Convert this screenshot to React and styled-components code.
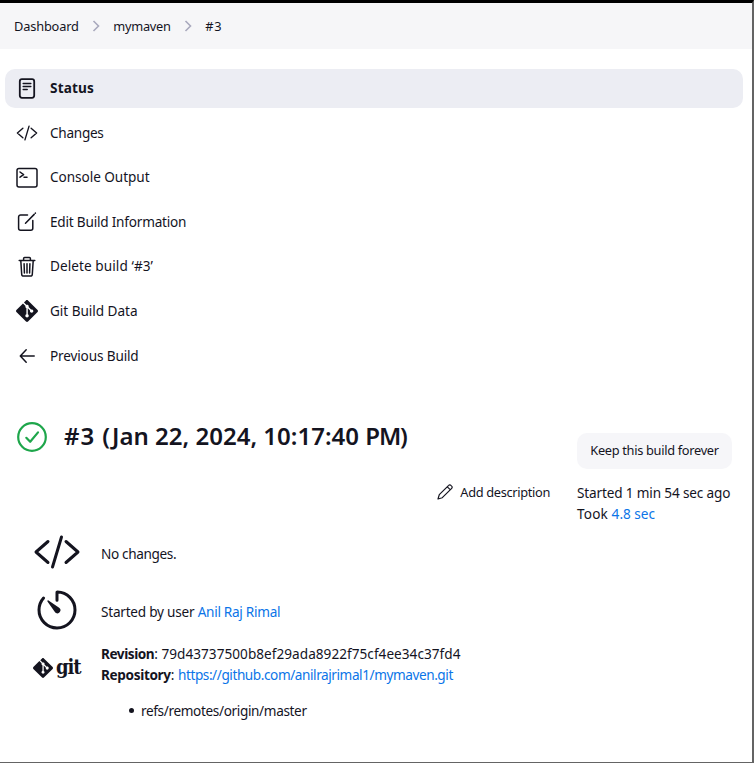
import React from "react";
import styled, { createGlobalStyle } from "styled-components";
import { IoCodeSlashOutline, IoTimerOutline } from "react-icons/io5";
import { SiGit } from "react-icons/si";

const GlobalStyle = createGlobalStyle`
  * { box-sizing: border-box; }
  body { margin: 0; background: #fff; color: #14141f; font-family: "Noto Sans", sans-serif; font-size: 13.6px; }
`;

const Page = styled.div`
  width: 754px;
  height: 763px;
  border-top: 3px solid #000;
  border-right: 2px solid #646464;
  border-bottom: 1px solid #646464;
  display: flex;
  flex-direction: column;
  overflow: hidden;
`;

const Breadcrumbs = styled.nav`
  height: 46px;
  flex: none;
  background: #f6f6f8;
  display: flex;
  align-items: center;
  padding-left: 14px;
`;

const Text = styled.span`
  white-space: pre;
  letter-spacing: ${(p) => p.$ls || 0}px;
  font-size: ${(p) => p.$size || 13.6}px;
  font-weight: ${(p) => p.$weight || 400};
`;

const Separator = styled.svg`
  width: 8px;
  height: 12px;
  margin: 0 13px 0 13.5px;
  fill: none;
  stroke: #a9a9bd;
  stroke-width: 1.6;
`;

const TaskList = styled.ul`
  list-style: none;
  margin: 20px 9px 0 5px;
  padding: 0;
  display: flex;
  flex-direction: column;
  gap: 5.6px;
`;

const Task = styled.li`
  height: 39px;
  border-radius: 10px;
  background: ${(p) => (p.$active ? "#ecedf3" : "transparent")};
  display: flex;
  align-items: center;
  gap: 12px;
  padding-left: 11px;

  ${Text} {
    padding-bottom: 2px;
  }
`;

const Glyph = styled.svg`
  width: 22px;
  height: 22px;
  flex: none;
  fill: none;
  stroke: currentColor;
  stroke-width: 1.5;
  stroke-linecap: round;
  stroke-linejoin: round;
`;

const BuildHeader = styled.header`
  display: grid;
  grid-template-columns: 1fr 175px;
  margin-top: 41px;
`;

const Title = styled.h1`
  margin: 0;
  height: 40px;
  display: flex;
  align-items: center;
  padding-left: 17px;

  ${Text} {
    padding-bottom: 2px;
  }
`;

const SuccessIcon = styled.svg`
  width: 30px;
  height: 30px;
  flex: none;
  margin-right: 17px;
  fill: none;
  stroke: #1ea64b;
  stroke-width: 2.2;
  stroke-linecap: round;
  stroke-linejoin: round;
`;

const AddDescription = styled.div`
  display: flex;
  justify-content: flex-end;
  align-items: center;
  gap: 7px;
  height: 21px;
  margin: 25px 27px 0 0;
`;

const PencilIcon = styled.svg`
  width: 16px;
  height: 16px;
  fill: none;
  stroke: currentColor;
  stroke-width: 1.2;
  stroke-linejoin: round;
`;

const Aside = styled.div`
  padding-top: 16px;
`;

const KeepButton = styled.button`
  display: flex;
  align-items: center;
  justify-content: center;
  width: 155px;
  height: 36px;
  border: 0;
  border-radius: 10px;
  background: #f6f6f9;
  color: inherit;
  font-family: inherit;
  padding: 0 0 1px;
  margin-bottom: 13px;
`;

const Line = styled.div`
  height: 21px;
  line-height: 21px;
`;

const Link = styled.a`
  color: #0b75e8;
  text-decoration: none;
  letter-spacing: ${(p) => p.$ls || 0}px;
`;

const Summary = styled.section`
  display: flex;
  flex-direction: column;
`;

const SummaryRow = styled.div`
  display: grid;
  grid-template-columns: 48px 1fr;
  column-gap: 20px;
  padding-left: 33px;
  height: 58px;
  align-items: center;

  > svg {
    margin-bottom: 2px;
  }

  > ${Text} {
    padding-top: 2px;
  }
`;

const GitRow = styled(SummaryRow)`
  height: auto;
  align-items: start;
  margin-top: 3px;
`;

const GitLogo = styled.div`
  display: flex;
  align-items: center;
  gap: 3px;
  padding-top: 15px;
`;

const Wordmark = styled.span`
  font: 700 20px/20px "DejaVu Serif Condensed", "DejaVu Serif", serif;
  font-stretch: condensed;
  letter-spacing: -1.1px;
  margin-top: -2px;
`;

const Refs = styled.ul`
  list-style: none;
  margin: 15px 0 0;
  padding-left: 28px;
`;

const Ref = styled.li`
  display: flex;
  align-items: center;
  gap: 7px;
  height: 21px;

  &::before {
    content: "";
    width: 5px;
    height: 5px;
    border-radius: 50%;
    background: currentColor;
  }
`;

const StatusIcon = () => (
  <Glyph viewBox="0 0 22 22">
    <rect x="3.8" y="1.2" width="14.4" height="18.6" rx="2.2" strokeWidth="1.8" />
    <path d="M7.200 5.500h7.600M7.200 8.500h7.600M7.200 11.500h4" />
  </Glyph>
);

const ConsoleIcon = () => (
  <Glyph viewBox="0 0 22 22">
    <rect x="1" y="1.6" width="20" height="18.4" rx="2" />
    <path d="M4 5l3.600 2.600L4 10.200M8 10.200h3" />
  </Glyph>
);

const EditIcon = () => (
  <Glyph viewBox="0 0 22 22">
    <path d="M11.500 4H4.600a2 2 0 0 0-2 2v11.200a2 2 0 0 0 2 2h10.200a2 2 0 0 0 2-2V9.600M9.500 12.200l8.700-8.800M19.400 2.100v.1" />
  </Glyph>
);

const TrashIcon = () => (
  <Glyph viewBox="0 0 22 22">
    <path d="M3.200 4.500h15.600M7.600 4.300V2.600a1 1 0 0 1 1-1h4.800a1 1 0 0 1 1 1v1.700M4.800 4.800l.9 13.400a2 2 0 0 0 2 1.900h6.600a2 2 0 0 0 2-1.900l.9-13.400M8.100 7.700l.3 9.300M11 7.700V17M13.900 7.700l-.3 9.300" />
  </Glyph>
);

const BackIcon = () => (
  <Glyph viewBox="0 0 22 22">
    <path d="M10.200 4.800L4.300 11l5.900 6.200M4.700 11h13.500" />
  </Glyph>
);

const tasks = [
  { label: "Status", icon: <StatusIcon />, ls: 0.15 },
  { label: "Changes", icon: <IoCodeSlashOutline size={22} />, ls: -0.28 },
  { label: "Console Output", icon: <ConsoleIcon />, ls: -0.05 },
  { label: "Edit Build Information", icon: <EditIcon />, ls: -0.21 },
  { label: "Delete build ‘#3’", icon: <TrashIcon />, ls: 0.07 },
  { label: "Git Build Data", icon: <SiGit size={22} />, ls: -0.04 },
  { label: "Previous Build", icon: <BackIcon />, ls: -0.15 },
];

const Chevron = () => (
  <Separator viewBox="0 0 8 12">
    <path d="M1.500 1l5 5-5 5" />
  </Separator>
);

export default function App() {
  return (
    <Page>
      <GlobalStyle />
      <Breadcrumbs>
        <Text $size={12.8} $ls={-0.17}>Dashboard</Text>
        <Chevron />
        <Text $size={12.8} $ls={-0.26}>mymaven</Text>
        <Chevron />
        <Text $size={12.8} $ls={0.9}>#3</Text>
      </Breadcrumbs>
      <TaskList>
        {tasks.map(({ label, icon, ls }, i) => (
          <Task key={label} $active={i === 0}>
            {icon}
            <Text $weight={i ? 400 : 700} $ls={ls}>{label}</Text>
          </Task>
        ))}
      </TaskList>
      <BuildHeader>
        <div>
          <Title>
            <SuccessIcon viewBox="0 0 30 30">
              <circle cx="15" cy="15" r="13.800" />
              <path d="M9.300 15.800l3.900 4L21 10.400" />
            </SuccessIcon>
            <Text $size={24} $weight={600} $ls={0.9}>{"#3 "}</Text>
            <Text $size={24} $weight={600}>{"(Jan 22, 2024, 10:17:40 "}</Text>
            <Text $size={24} $weight={600} $ls={-1.1}>PM)</Text>
          </Title>
          <AddDescription>
            <PencilIcon viewBox="0 0 16 16">
              <path d="M1 15l1.300-4.300L11.700 1.300a1.500 1.500 0 0 1 2.200 0l.8.8a1.500 1.500 0 0 1 0 2.200L5.300 13.700zM10.300 2.800l2.900 2.900" />
            </PencilIcon>
            <Text $size={12.8} $ls={-0.33}>Add description</Text>
          </AddDescription>
        </div>
        <Aside>
          <KeepButton><Text $size={12.8} $ls={-0.31}>Keep this build forever</Text></KeepButton>
          <Line><Text $ls={-0.16}>Started 1 min 54 sec ago</Text></Line>
          <Line><Text $ls={0.15}>Took <Link>4.8 sec</Link></Text></Line>
        </Aside>
      </BuildHeader>
      <Summary>
        <SummaryRow><IoCodeSlashOutline size={48} /><Text $ls={-0.36}>No changes.</Text></SummaryRow>
        <SummaryRow><IoTimerOutline size={48} /><Text $ls={-0.23}>Started by user <Link $ls={-0.29}>Anil Raj Rimal</Link></Text></SummaryRow>
        <GitRow>
          <GitLogo><SiGit size={20} /><Wordmark>git</Wordmark></GitLogo>
          <div>
            <Line><Text $weight={700} $ls={-0.45}>Revision</Text><Text $ls={0.03}>: 79d43737500b8ef29ada8922f75cf4ee34c37fd4</Text></Line>
            <Line><Text $weight={700} $ls={-0.35}>Repository</Text><Text>: <Link $ls={-0.425}>https://github.com/anilrajrimal1/mymaven.git</Link></Text></Line>
            <Refs><Ref><Text $ls={-0.36}>refs/remotes/origin/master</Text></Ref></Refs>
          </div>
        </GitRow>
      </Summary>
    </Page>
  );
}
